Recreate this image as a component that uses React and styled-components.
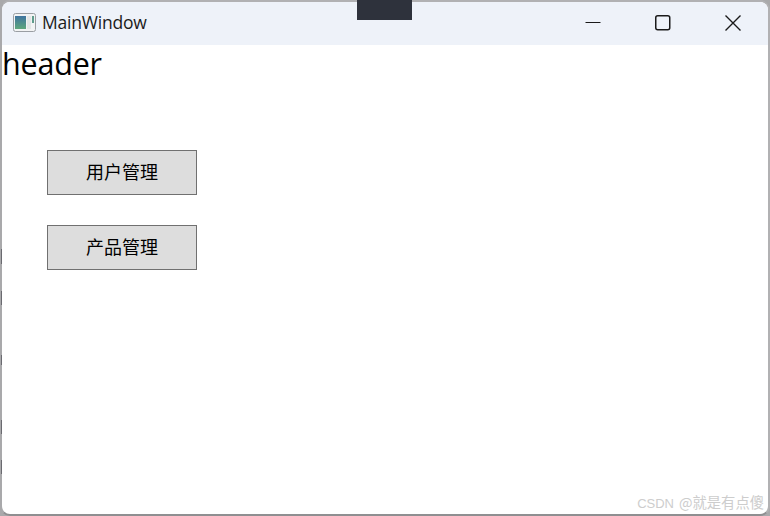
import React from "react";
import styled, { createGlobalStyle } from "styled-components";

const GlobalStyle = createGlobalStyle`
  html, body {
    margin: 0;
    padding: 0;
    background: #a9a9ab;
  }
`;

const Page = styled.div`
  position: relative;
  width: 770px;
  height: 516px;
  overflow: hidden;
`;

const Window = styled.div`
  box-sizing: border-box;
  width: 770px;
  height: 516px;
  display: flex;
  flex-direction: column;
  border: 2px solid #b1b1b3;
  border-left-color: #a9a9ab;
  border-bottom-color: #8f8f91;
  border-radius: 10px;
  overflow: hidden;
  background: #fff;
`;

const TitleBar = styled.div`
  flex: 0 0 43px;
  display: flex;
  align-items: center;
  padding-left: 11px;
  background: #eef2f9;
`;

const AppIcon = styled.svg`
  width: 23px;
  height: 19px;
  margin-right: 6px;
  margin-bottom: 2px;
`;

const Title = styled.span`
  flex: 1;
  font: 17.5px "Open Sans", "Noto Sans", sans-serif;
  color: #1b1b1b;
  letter-spacing: -0.2px;
  padding-bottom: 4px;
`;

const WinButtons = styled.div`
  display: flex;
  align-items: center;
  padding-bottom: 2px;
`;

const WinButton = styled.div`
  width: 70px;
  height: 41px;
  display: flex;
  align-items: center;
  justify-content: center;
`;

const Content = styled.div`
  flex: 1;
  display: flex;
  flex-direction: column;
`;

const Header = styled.div`
  font: 30.5px/36px "Open Sans", "Noto Sans", sans-serif;
  color: #000;
  letter-spacing: -0.2px;
`;

const Menu = styled.div`
  display: flex;
  flex-direction: column;
  gap: 30px;
  padding: 69px 0 0 45px;
`;

const MenuButton = styled.button`
  box-sizing: border-box;
  width: 150px;
  height: 45px;
  padding: 0 0 3px;
  background: #dddddd;
  border: 1px solid #707070;
  border-radius: 0;
  font: 18px "Noto Sans CJK SC", sans-serif;
  color: #000;
`;

const Notch = styled.div`
  position: absolute;
  left: 357px;
  top: 0;
  width: 55px;
  height: 20px;
  background: #2e323c;
`;

const EdgeMark = styled.div`
  position: absolute;
  left: 1px;
  top: ${(props) => props.$top}px;
  width: 1px;
  height: ${(props) => props.$height}px;
  background: #6a6a70;
`;

const Watermark = styled.div`
  position: absolute;
  right: 6px;
  bottom: 4px;
  font: 14.3px "Noto Sans CJK SC", sans-serif;
  color: #cdcdcd;
`;

const WatermarkBrand = styled.span`
  font: 13px "Liberation Sans", sans-serif;
  margin-right: 5px;
`;

const edgeMarks = [
  [249, 15],
  [291, 14],
  [355, 10],
  [420, 14],
  [460, 14],
];

export default function App() {
  return (
    <Page>
      <GlobalStyle />
      <Window>
        <TitleBar>
          <AppIcon viewBox="0 0 23 19">
            <rect x="0.5" y="0.5" width="22" height="18" rx="2" fill="#f2f3f4" stroke="#9a9ea3" />
            <defs>
              <linearGradient id="pane" x1="0" y1="0" x2="0" y2="1">
                <stop offset="0" stopColor="#3f74a0" />
                <stop offset="1" stopColor="#5fa77c" />
              </linearGradient>
            </defs>
            <rect x="2" y="3" width="11" height="13" fill="url(#pane)" />
            <rect x="14" y="3" width="4" height="13" fill="#e3e6e6" />
            <rect x="19" y="3" width="2" height="7" fill="#5f9c8c" />
          </AppIcon>
          <Title>MainWindow</Title>
          <WinButtons>
            <WinButton>
              <svg width="16" height="16" viewBox="0 0 16 16">
                <path d="M0.5 7.5H15.5" stroke="#1a1a1a" strokeWidth="1" fill="none" />
              </svg>
            </WinButton>
            <WinButton>
              <svg width="16" height="16" viewBox="0 0 16 16">
                <rect x="0.75" y="0.75" width="14" height="14" rx="2" stroke="#1a1a1a" strokeWidth="1.5" fill="none" />
              </svg>
            </WinButton>
            <WinButton>
              <svg width="16" height="16" viewBox="0 0 16 16">
                <path d="M0.5 0.5L15.5 15.5M15.5 0.5L0.5 15.5" stroke="#1a1a1a" strokeWidth="1.4" fill="none" />
              </svg>
            </WinButton>
          </WinButtons>
        </TitleBar>
        <Content>
          <Header>header</Header>
          <Menu>
            <MenuButton>用户管理</MenuButton>
            <MenuButton>产品管理</MenuButton>
          </Menu>
        </Content>
      </Window>
      <Notch />
      {edgeMarks.map(([top, height]) => (
        <EdgeMark key={top} $top={top} $height={height} />
      ))}
      <Watermark>
        <WatermarkBrand>CSDN</WatermarkBrand>@就是有点傻
      </Watermark>
    </Page>
  );
}
